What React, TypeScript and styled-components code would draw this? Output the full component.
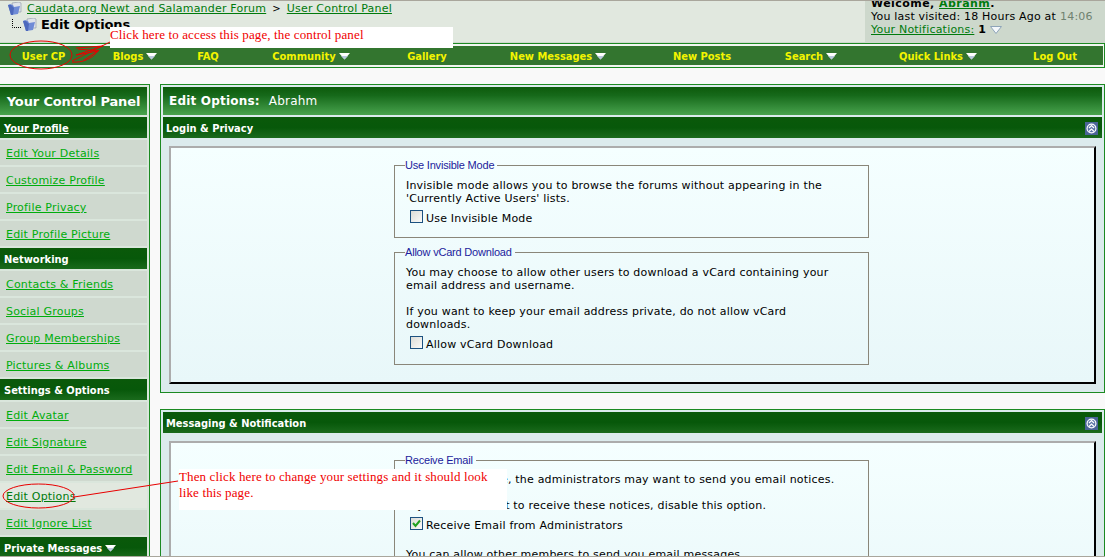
import React from 'react';
import styled, { createGlobalStyle } from 'styled-components';

const GlobalStyle = createGlobalStyle`
  html, body {
    margin: 0;
    padding: 0;
    background: #f9f9f9;
    overflow: hidden;
  }
  * {
    box-sizing: border-box;
  }
`;

const boldFont = `"DejaVu Sans Condensed", "DejaVu Sans", Verdana, sans-serif`;

const Page = styled.div`
  position: relative;
  width: 1105px;
  height: 557px;
  overflow: hidden;
  background: #f9f9f9;
  border-top: 1px solid #a9a69c;
  border-bottom: 1px solid #a9a69c;
  font-family: "DejaVu Sans", Verdana, sans-serif;
  font-size: 11px;
  letter-spacing: 0.2px;
  color: #000;
`;

const Header = styled.div`
  display: flex;
  height: 42px;
  background: #e1e8df;
  border-bottom: 1px solid #cdd8cc;
`;

const Crumbs = styled.div`
  flex: 1;
  padding: 0 0 0 7px;
`;

const CrumbLine = styled.div`
  display: flex;
  align-items: center;
  height: 15px;
  gap: 5px;
`;

const CrumbLink = styled.a`
  color: #007a0c;
  text-decoration: underline;
`;

const Separator = styled.span`
  font-size: 10px;
  margin: 0 1px;
`;

const CurrentLine = styled.div`
  display: flex;
  align-items: center;
  height: 17px;
  margin-left: 4px;
`;

const PageTitle = styled.strong`
  font-size: 13px;
  letter-spacing: -0.1px;
  margin-left: 4px;
`;

const Welcome = styled.div`
  width: 240px;
  height: 100%;
  margin-left: 3px;
  padding-left: 6px;
  background: #cdd8cc;
  line-height: 13px;
  overflow: hidden;
  white-space: nowrap;
`;

const WelcomeTop = styled.div`
  margin-top: -4px;
  height: 13px;
  font-weight: bold;
  letter-spacing: 0.45px;
`;

const WelcomeLine = styled.div`
  display: flex;
  align-items: center;
  height: 13px;
`;

const NotificationLine = styled(WelcomeLine)`
  gap: 4px;
`;

const Time = styled.span`
  color: #6f8270;
  margin-left: 4px;
`;

const NavOuter = styled.div`
  height: 25px;
  padding: 2px 1px 2px 0;
  border-top: 1px solid #1c8a22;
  border-bottom: 1px solid #1c8a22;
  border-right: 1px solid #1c8a22;
  background: #f1f5f0;
`;

const Nav = styled.nav`
  display: flex;
  height: 100%;
  padding-top: 1px;
  background: #33752f;
  font-family: ${boldFont};
  font-weight: bold;
  letter-spacing: 0;
  color: #f4f400;
`;

const NavCell = styled.div<{ $w: number }>`
  width: ${p => p.$w}px;
  display: flex;
  align-items: center;
  justify-content: center;
  gap: 3px;
  white-space: nowrap;
`;

const Body = styled.div`
  display: flex;
  gap: 10px;
  margin-top: 16px;
  align-items: flex-start;
`;

const Sidebar = styled.aside`
  width: 150px;
  flex: none;
  padding: 2px 2px 0 0;
  background: #dae6dc;
  border-top: 1px solid #1c8a22;
  border-right: 1px solid #1c8a22;
  height: 480px;
`;

const titleGradient = `linear-gradient(180deg, #0d5a0b 0%, #16691a 30%, #2f8634 65%, #49a34d 100%)`;
const sectionGradient = `linear-gradient(180deg, #0a590a 0%, #07580a 50%, #1a6a1c 100%)`;

const SideTitle = styled.div`
  height: 28px;
  background: ${titleGradient};
  color: #fff;
  font-size: 13px;
  font-weight: bold;
  letter-spacing: -0.15px;
  display: flex;
  align-items: center;
  justify-content: center;
  white-space: nowrap;
`;

const SideHeading = styled.div<{ $underline?: boolean }>`
  height: 21px;
  margin-top: 2px;
  padding: 2px 0 0 4px;
  display: flex;
  align-items: center;
  gap: 3px;
  background: ${sectionGradient};
  color: #fff;
  font-family: ${boldFont};
  font-weight: bold;
  letter-spacing: 0;
  text-decoration: ${p => (p.$underline ? 'underline' : 'none')};
`;

const SideItem = styled.div<{ $active?: boolean }>`
  height: 25px;
  margin-top: 2px;
  padding: 2px 0 0 6px;
  display: flex;
  align-items: center;
  background: ${p => (p.$active ? '#e1e8df' : '#cfd9cf')};
  color: ${p => (p.$active ? '#007a0c' : '#00ad0c')};
  text-decoration: underline;
  white-space: nowrap;
`;

const Main = styled.main`
  flex: 1;
  min-width: 0;
`;

const Panel = styled.section<{ $h: number }>`
  height: ${p => p.$h}px;
  margin-bottom: 16px;
  padding: 2px 2px 0;
  border: 1px solid #1c8a22;
  background: #dcebed;
`;

const PanelTitle = styled.div`
  height: 28px;
  padding-left: 6px;
  display: flex;
  align-items: center;
  gap: 9px;
  margin-bottom: 2px;
  background: ${titleGradient};
  color: #fff;
  font-size: 12px;
`;

const SectionBar = styled.div`
  height: 21px;
  padding: 2px 4px 0 3px;
  display: flex;
  align-items: center;
  justify-content: space-between;
  background: ${sectionGradient};
  color: #fff;
  font-family: ${boldFont};
  font-weight: bold;
  letter-spacing: 0;
`;

const ContentBox = styled.div<{ $h: number }>`
  height: ${p => p.$h}px;
  margin: 8px 6px 0;
  padding: 11px 225px 0 223px;
  background: linear-gradient(180deg, #f5ffff 0%, #e8f7f9 100%);
  border-top: 2px solid #acacac;
  border-left: 2px solid #acacac;
  border-right: 2px solid #000;
  border-bottom: 2px solid #000;
`;

const Field = styled.fieldset<{ $h: number; $top?: number }>`
  height: ${p => p.$h}px;
  margin: 0 0 8px;
  padding: ${p => p.$top ?? 7}px 11px 0 11px;
  border: 1px solid #8a8679;
  min-width: 0;
  line-height: 13px;
`;

const Legend = styled.legend`
  padding: 0 3px 0 0;
  margin-left: -1px;
  font-family: "Liberation Sans", Arial, sans-serif;
  font-size: 11px;
  letter-spacing: -0.2px;
  color: #1c1c9c;
`;

const Para = styled.p`
  margin: 0 0 13px;
  white-space: nowrap;
`;

const TrailingPara = styled(Para)`
  margin-top: 16px;
`;

const CheckRow = styled.label`
  display: flex;
  align-items: center;
  gap: 3px;
  height: 14px;
  margin: -7px 0 0 4px;
`;

const CheckBox = styled.span`
  width: 13px;
  height: 13px;
  margin-top: -3px;
  flex: none;
  display: flex;
  align-items: center;
  justify-content: center;
  border: 1px solid #1c5180;
  background: linear-gradient(135deg, #dcdcd7 0%, #fbfbf9 100%);
`;

const Annotations = styled.svg`
  position: absolute;
  left: 0;
  top: -1px;
  width: 1105px;
  height: 557px;
  pointer-events: none;
`;

const Note = styled.div<{ $x: number; $y: number; $w: number; $h: number }>`
  position: absolute;
  left: ${p => p.$x}px;
  top: ${p => p.$y}px;
  width: ${p => p.$w}px;
  height: ${p => p.$h}px;
  background: #fff;
  color: #f00000;
  font-family: "Liberation Serif", "Times New Roman", serif;
  font-size: 13px;
  letter-spacing: 0.13px;
  line-height: 16px;
`;

const DownArrow = () => (
  <svg width="11" height="7" viewBox="0 0 11 7">
    <path d="M0 0h11L5.500 6.500z" fill="#fff" />
    <path d="M2 3h7L5.500 6.500z" fill="#b9c8de" />
  </svg>
);

const HollowArrow = () => (
  <svg width="12" height="8" viewBox="0 0 12 8">
    <path d="M.5.5h11L6 7.500z" fill="#f4f8fb" stroke="#8ea4b8" />
  </svg>
);

const Collapse = () => (
  <svg width="13" height="13" viewBox="0 0 13 13">
    <rect width="13" height="13" fill="#4a6496" />
    <circle cx="6.500" cy="6.500" r="5" fill="#fff" />
    <circle cx="6.500" cy="6.500" r="3.800" fill="#5b74a6" />
    <path d="M4 6l2.500-2.500L9 6M4 9.500L6.500 7 9 9.500" fill="none" stroke="#fff" strokeWidth="1.200" />
  </svg>
);

const Tick = () => (
  <svg width="11" height="11" viewBox="0 0 11 11">
    <path d="M2 5l2.500 3L9 2.500" fill="none" stroke="#21a121" strokeWidth="2" />
  </svg>
);

const Folder = () => (
  <svg width="15" height="14" viewBox="0 0 15 14">
    <path d="M5 1l7-1 2 1v9H6z" fill="#dfe3ea" stroke="#8c94a4" strokeWidth=".6" />
    <path d="M1 3l2-1 3 1 1 2 6-1-2 8-7 1z" fill="#6f8bd6" />
    <path d="M1 3l3 0 3 3-1 7-2 0z" fill="#4d69bc" />
  </svg>
);

const profileItems = ['Edit Your Details', 'Customize Profile', 'Profile Privacy', 'Edit Profile Picture'];
const networkItems = ['Contacts & Friends', 'Social Groups', 'Group Memberships', 'Pictures & Albums'];
const settingsItems = ['Edit Avatar', 'Edit Signature', 'Edit Email & Password', 'Edit Options', 'Edit Ignore List'];

const navItems = [
  { label: 'User CP', w: 87 },
  { label: 'Blogs', w: 96, menu: true },
  { label: 'FAQ', w: 50 },
  { label: 'Community', w: 156, menu: true },
  { label: 'Gallery', w: 76 },
  { label: 'New Messages', w: 186, menu: true },
  { label: 'New Posts', w: 102 },
  { label: 'Search', w: 116, menu: true },
  { label: 'Quick Links', w: 138, menu: true },
  { label: 'Log Out', w: 96 },
];

const renderItem = (label: string) => (
  <SideItem key={label} $active={label === 'Edit Options'}>
    {label}
  </SideItem>
);

export default function App() {
  return (
    <Page>
      <GlobalStyle />
      <Header>
        <Crumbs>
          <CrumbLine>
            <Folder />
            <CrumbLink>Caudata.org Newt and Salamander Forum</CrumbLink>
            <Separator>&gt;</Separator>
            <CrumbLink>User Control Panel</CrumbLink>
          </CrumbLine>
          <CurrentLine>
            <svg width="11" height="11" viewBox="0 0 11 11">
              <path d="M1.500 0v8.500H11" fill="none" stroke="#000" strokeDasharray="1 1" />
            </svg>
            <Folder />
            <PageTitle>Edit Options</PageTitle>
          </CurrentLine>
        </Crumbs>
        <Welcome>
          <WelcomeTop>
            Welcome, <CrumbLink>Abrahm</CrumbLink>.
          </WelcomeTop>
          <WelcomeLine>
            You last visited: 18 Hours Ago at<Time>14:06</Time>
          </WelcomeLine>
          <NotificationLine>
            <CrumbLink>Your Notifications:</CrumbLink>
            <strong>1</strong>
            <HollowArrow />
          </NotificationLine>
        </Welcome>
      </Header>

      <NavOuter>
        <Nav>
          {navItems.map(item => (
            <NavCell key={item.label} $w={item.w}>
              {item.label}
              {item.menu && <DownArrow />}
            </NavCell>
          ))}
        </Nav>
      </NavOuter>

      <Body>
        <Sidebar>
          <SideTitle>Your Control Panel</SideTitle>
          <SideHeading $underline>Your Profile</SideHeading>
          {profileItems.map(renderItem)}
          <SideHeading>Networking</SideHeading>
          {networkItems.map(renderItem)}
          <SideHeading>Settings &amp; Options</SideHeading>
          {settingsItems.map(renderItem)}
          <SideHeading>
            Private Messages <DownArrow />
          </SideHeading>
        </Sidebar>

        <Main>
          <Panel $h={309}>
            <PanelTitle>
              <strong>Edit Options:</strong> Abrahm
            </PanelTitle>
            <SectionBar>
              Login &amp; Privacy
              <Collapse />
            </SectionBar>
            <ContentBox $h={238}>
              <Field $h={79}>
                <Legend>Use Invisible Mode</Legend>
                <Para>
                  Invisible mode allows you to browse the forums without appearing in the
                  <br />
                  'Currently Active Users' lists.
                </Para>
                <CheckRow>
                  <CheckBox />
                  Use Invisible Mode
                </CheckRow>
              </Field>
              <Field $h={119}>
                <Legend>Allow vCard Download</Legend>
                <Para>
                  You may choose to allow other users to download a vCard containing your
                  <br />
                  email address and username.
                </Para>
                <Para>
                  If you want to keep your email address private, do not allow vCard
                  <br />
                  downloads.
                </Para>
                <CheckRow>
                  <CheckBox />
                  Allow vCard Download
                </CheckRow>
              </Field>
            </ContentBox>
          </Panel>

          <Panel $h={200}>
            <SectionBar>
              Messaging &amp; Notification
              <Collapse />
            </SectionBar>
            <ContentBox $h={200}>
              <Field $h={190} $top={6}>
                <Legend>Receive Email</Legend>
                <Para>
                  From time to time, the administrators may want to send you email notices.
                </Para>
                <Para>If you do not want to receive these notices, disable this option.</Para>
                <CheckRow>
                  <CheckBox>
                    <Tick />
                  </CheckBox>
                  Receive Email from Administrators
                </CheckRow>
                <TrailingPara>You can allow other members to send you email messages</TrailingPara>
              </Field>
            </ContentBox>
          </Panel>
        </Main>
      </Body>

      <Note $x={110} $y={26} $w={343} $h={21}>
        Click here to access this page, the control panel
      </Note>
      <Note $x={179} $y={468} $w={328} $h={41}>
        Then click here to change your settings and it should look
        <br />
        like this page.
      </Note>
      <Annotations viewBox="0 0 1105 557">
        <g fill="none" stroke="#e80000" strokeWidth="1">
          <ellipse cx="41" cy="55" rx="31" ry="14" />
          <ellipse cx="38.500" cy="496" rx="35.500" ry="12" />
          <path d="M74 497L178 481" />
          <path d="M72 61L110 42M76 48l27 -2L76 55l22 -4L84 60M78 49l20 2M72 62c10 1 20-3 27-12" />
        </g>
      </Annotations>
    </Page>
  );
}
